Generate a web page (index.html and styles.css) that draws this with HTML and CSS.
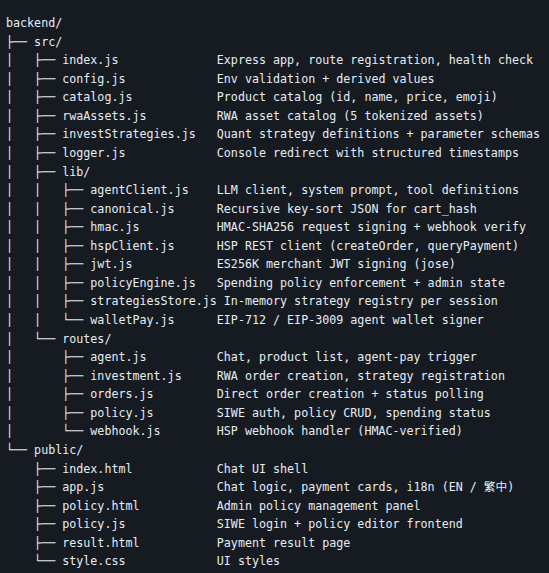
FILE: index.html
```html
<!DOCTYPE html>
<html lang="en">
<head>
<meta charset="utf-8">
<title>backend tree</title>
<link rel="stylesheet" href="styles.css">
</head>
<body>
<pre class="tree"><code>backend/
├── src/
│   ├── index.js              Express app, route registration, health check
│   ├── config.js             Env validation + derived values
│   ├── catalog.js            Product catalog (id, name, price, emoji)
│   ├── rwaAssets.js          RWA asset catalog (5 tokenized assets)
│   ├── investStrategies.js   Quant strategy definitions + parameter schemas
│   ├── logger.js             Console redirect with structured timestamps
│   ├── lib/
│   │   ├── agentClient.js    LLM client, system prompt, tool definitions
│   │   ├── canonical.js      Recursive key-sort JSON for cart_hash
│   │   ├── hmac.js           HMAC-SHA256 request signing + webhook verify
│   │   ├── hspClient.js      HSP REST client (createOrder, queryPayment)
│   │   ├── jwt.js            ES256K merchant JWT signing (jose)
│   │   ├── policyEngine.js   Spending policy enforcement + admin state
│   │   ├── strategiesStore.js In-memory strategy registry per session
│   │   └── walletPay.js      EIP-712 / EIP-3009 agent wallet signer
│   └── routes/
│       ├── agent.js          Chat, product list, agent-pay trigger
│       ├── investment.js     RWA order creation, strategy registration
│       ├── orders.js         Direct order creation + status polling
│       ├── policy.js         SIWE auth, policy CRUD, spending status
│       └── webhook.js        HSP webhook handler (HMAC-verified)
└── public/
    ├── index.html            Chat UI shell
    ├── app.js                Chat logic, payment cards, i18n (EN / 繁中)
    ├── policy.html           Admin policy management panel
    ├── policy.js             SIWE login + policy editor frontend
    ├── result.html           Payment result page
    └── style.css             UI styles</code></pre>
</body>
</html>
```
FILE: styles.css
```css
html, body {
  margin: 0;
  padding: 0;
  background: #161b22;
}

body {
  min-height: 573px;
}

.tree {
  margin: 0;
  padding: 14px 0 0 6px;
  font-family: "DejaVu Sans Mono", "Noto Sans CJK TC", monospace;
  font-size: 11.68px;
  line-height: 18.56px;
  color: #e6edf3;
  white-space: pre;
}

.tree code {
  font-family: inherit;
  font-size: inherit;
}
```
